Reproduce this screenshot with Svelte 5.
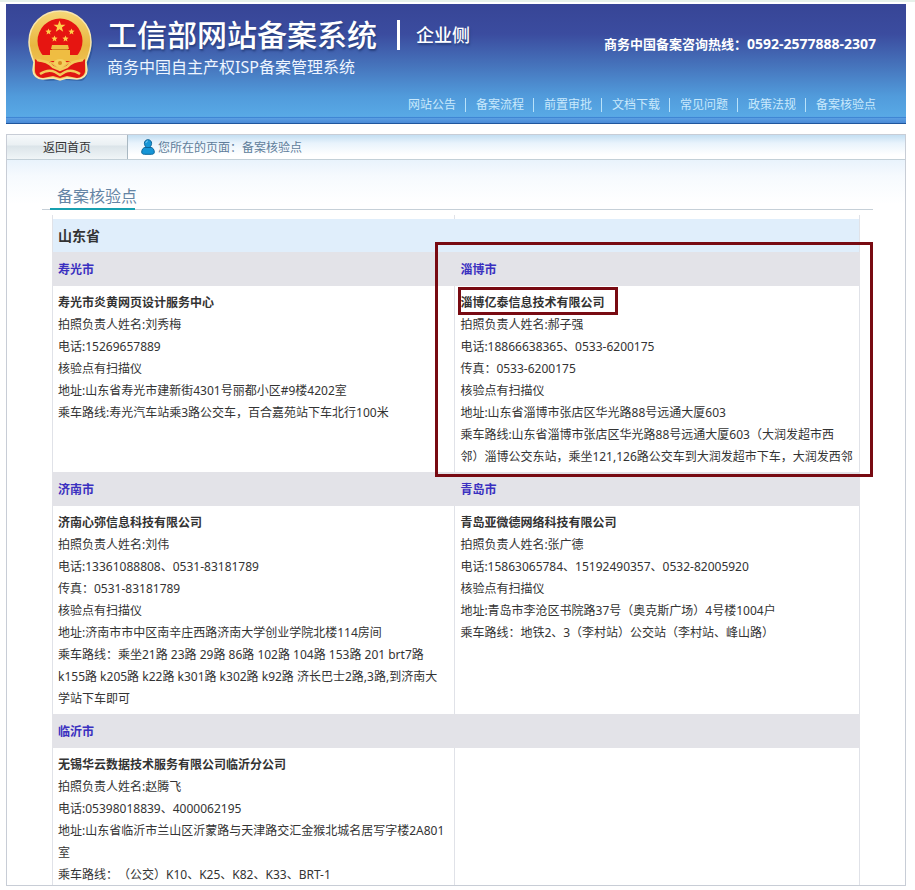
<script>
    const navItems = ['网站公告', '备案流程', '前置审批', '文档下载', '常见问题', '政策法规', '备案核验点'];

    const province = '山东省';

    // Each row holds one or two cities
    const rows = [
        [
            {
                city: '寿光市',
                company: '寿光市炎黄网页设计服务中心',
                lines: [
                    '拍照负责人姓名:刘秀梅',
                    '电话:15269657889',
                    '核验点有扫描仪',
                    '地址:山东省寿光市建新街4301号丽都小区#9楼4202室',
                    '乘车路线:寿光汽车站乘3路公交车，百合嘉苑站下车北行100米'
                ]
            },
            {
                city: '淄博市',
                company: '淄博亿泰信息技术有限公司',
                marked: true,
                lines: [
                    '拍照负责人姓名:郝子强',
                    '电话:18866638365、0533-6200175',
                    '传真：0533-6200175',
                    '核验点有扫描仪',
                    '地址:山东省淄博市张店区华光路88号远通大厦603',
                    '乘车路线:山东省淄博市张店区华光路88号远通大厦603（大润发超市西邻）淄博公交东站，乘坐121,126路公交车到大润发超市下车，大润发西邻'
                ]
            }
        ],
        [
            {
                city: '济南市',
                company: '济南心弥信息科技有限公司',
                lines: [
                    '拍照负责人姓名:刘伟',
                    '电话:13361088808、0531-83181789',
                    '传真：0531-83181789',
                    '核验点有扫描仪',
                    '地址:济南市市中区南辛庄西路济南大学创业学院北楼114房间',
                    '乘车路线：乘坐21路 23路 29路 86路 102路 104路 153路 201 brt7路 k155路 k205路 k22路 k301路 k302路 k92路 济长巴士2路,3路,到济南大学站下车即可'
                ]
            },
            {
                city: '青岛市',
                company: '青岛亚微德网络科技有限公司',
                lines: [
                    '拍照负责人姓名:张广德',
                    '电话:15863065784、15192490357、0532-82005920',
                    '核验点有扫描仪',
                    '地址:青岛市李沧区书院路37号（奥克斯广场）4号楼1004户',
                    '乘车路线：地铁2、3（李村站）公交站（李村站、峰山路）'
                ]
            }
        ],
        [
            {
                city: '临沂市',
                company: '无锡华云数据技术服务有限公司临沂分公司',
                lines: [
                    '拍照负责人姓名:赵腾飞',
                    '电话:05398018839、4000062195',
                    '地址:山东省临沂市兰山区沂蒙路与天津路交汇金猴北城名居写字楼2A801室',
                    '乘车路线：（公交）K10、K25、K82、K33、BRT-1'
                ]
            },
            null
        ]
    ];
</script>

<div class="page">
    <div class="top-strip"></div>

    <header>
        <div class="brand-row">
            <svg class="emblem" viewBox="0 0 66 72" aria-hidden="true">
                <defs>
                    <linearGradient id="gold" x1="0" y1="0" x2="0" y2="1">
                        <stop offset="0" stop-color="#f6d878" />
                        <stop offset="0.5" stop-color="#e8b640" />
                        <stop offset="1" stop-color="#f3cc62" />
                    </linearGradient>
                </defs>
                <path d="M35 3C52 3 66 17 66 34c0 11-5 18-5 24 0 6-2 12-7 13l-17-1-17 1c-7-1-10-6-10-13z" fill="#1f4585" opacity="0.5" />
                <path d="M33 1C50 1 64 14 64 32c0 8-3 15-5 20l1 8c0 5-4 9-10 9l-10-1-7 2-7-2-10 1C10 69 6 65 6 60l1-8C5 47 2 40 2 32 2 14 16 1 33 1z" fill="url(#gold)" stroke="#f8e6ae" stroke-width="1.5" />
                <circle cx="33" cy="31" r="22.5" fill="#e61511" />
                <path d="M8 49c4 4 9 3 14 3l11 8 11-8c5 0 10 1 14-3v12c0 4-4 7-8 7l-10-2-7 2-7-2-10 2c-4 0-8-3-8-7z" fill="#e01612" />
                <path d="m32.500 10.500 1.500 4.200 4.500.1-3.600 2.700 1.300 4.300-3.700-2.600-3.700 2.600 1.300-4.300-3.600-2.700 4.500-.1z" fill="#ffcf4a" />
                <path id="star" d="m21.500 18.500.9 2 2.200.2-1.700 1.500.5 2.200-1.900-1.100-1.900 1.100.5-2.200-1.700-1.500 2.200-.2z" fill="#ffcf4a" />
                <use href="#star" x="23" />
                <use href="#star" x="6" y="7" />
                <use href="#star" x="17" y="7" />
                <path d="M25 35h16l1 4H24zM23 40h20v5h9v6H14v-6h9z" fill="#efbd42" />
                <path d="M25 39.500h16" stroke="#c98220" stroke-width="1" />
                <path d="M10 50c7 1 12 2 16 7l7 3 7-3c4-5 9-6 16-7M13 64c6-4 11-4 15-2l5 3 5-3c4-2 9-2 15 2" fill="none" stroke="#f3cb5a" stroke-width="2.500" />
                <path d="M26 53c2-3 4-4 7-4s5 1 7 4l-7 6z" fill="#f5d15e" />
                <circle cx="33" cy="53" r="2" fill="#d98a1f" />
            </svg>
            <div class="brand">
                <div class="title-line">
                    <h1>工信部网站备案系统</h1>
                    <span class="side">企业侧</span>
                </div>
                <p class="subtitle">商务中国自主产权ISP备案管理系统</p>
            </div>
            <p class="hotline">商务中国备案咨询热线：<span>0592-2577888-2307</span></p>
        </div>
        <nav>
            {#each navItems as item}
                <a href="#top">{item}</a>
            {/each}
        </nav>
    </header>

    <main>
        <div class="crumb-bar">
            <a class="home" href="#home">返回首页</a>
            <svg class="user" viewBox="0 0 14 16" aria-hidden="true">
                <path d="M7 .7c2.200 0 3.600 1.600 3.600 3.700 0 1.500-.7 2.800-1.700 3.500 3 .6 4.400 2.600 4.400 5.300 0 1.500-1.300 2.100-2.800 2.100h-7C2 15.300.7 14.700.7 13.200.7 10.500 2.100 8.500 5.100 7.900 4.100 7.200 3.400 5.900 3.400 4.400 3.400 2.300 4.800.7 7 .7z" fill="#1695d6" stroke="#0a6398" />
                <path d="M4.200 8.500h5.600" stroke="#0a6398" />
                <path d="M5 4c0-1.300.8-2 2-2" fill="none" stroke="#7fd0f5" />
            </svg>
            <span class="crumb">您所在的页面：备案核验点</span>
        </div>

        <div class="content">
            <div class="heading">
                <h2>备案核验点</h2>
            </div>

            <table>
                <colgroup>
                    <col class="first" />
                    <col />
                </colgroup>
                <tbody>
                    <tr class="spacer"><td></td><td></td></tr>
                    <tr class="province">
                        <th colspan="2">{province}</th>
                    </tr>
                    {#each rows as row}
                        <tr class="city">
                            {#each row as point}
                                <th>{point ? point.city : ''}</th>
                            {/each}
                        </tr>
                        <tr class="detail">
                            {#each row as point}
                                <td>
                                    {#if point}
                                        <strong class:marked={point.marked}>{point.company}</strong>
                                        {#each point.lines as line}
                                            <p>{line}</p>
                                        {/each}
                                        {#if point.marked}
                                            <div class="frame"></div>
                                        {/if}
                                    {/if}
                                </td>
                            {/each}
                        </tr>
                    {/each}
                </tbody>
            </table>
        </div>
    </main>
</div>

<style>
    :global(body) {
        margin: 0;
        background: #fff;
    }

    .page {
        display: flex;
        flex-direction: column;
        height: 100vh;
        box-sizing: border-box;
        padding-bottom: 4px;
        font-family: "Noto Sans", "Noto Sans CJK SC", sans-serif;
        font-size: 12px;
        line-height: 22px;
        color: #333;
        text-spacing-trim: space-all;
    }

    h1, h2, p {
        margin: 0;
        font-weight: normal;
    }

    a {
        text-decoration: none;
    }

    .top-strip {
        flex: none;
        height: 2px;
        margin-bottom: 2px;
        background: #e6f1ea;
    }

    header {
        flex: none;
        display: flex;
        flex-direction: column;
        justify-content: space-between;
        box-sizing: border-box;
        min-height: 120px;
        margin: 0 9px 10px 6px;
        padding: 6px 30px 11px 21px;
        border-bottom: 1px solid #20569c;
        background:
            linear-gradient(#3f86d4, #3f86d4) 0 113px / 100% 1px no-repeat,
            linear-gradient(#374596 0, #3b4c9f 30px, #4674bc 62px, #519bdb 92px, #58a9e5 112px, #5b9fe3 114px, #4a8ad6 119px);
    }

    .brand-row {
        display: flex;
        align-items: flex-start;
    }

    .emblem {
        width: 66px;
        height: 72px;
        margin-right: 14px;
    }

    .brand {
        padding-top: 8px;
    }

    .title-line {
        display: flex;
        align-items: center;
        color: #fff;
        text-shadow: 1px 2px 2px #27407f;
    }

    h1 {
        padding-right: 20px;
        font-size: 30px;
        line-height: 34px;
        font-weight: 500;
    }

    .side {
        padding-left: 16px;
        border-left: 3px solid #fff;
        font-size: 18px;
        line-height: 30px;
        font-weight: 500;
    }

    .subtitle {
        margin-top: 4px;
        font-size: 16px;
        color: #eef5ff;
    }

    .hotline {
        margin-left: auto;
        padding-top: 23px;
        font-size: 13px;
        font-weight: bold;
        color: #fff;
        white-space: nowrap;
    }

    .hotline span {
        font-size: 14px;
    }

    nav {
        display: flex;
        justify-content: flex-end;
    }

    nav a {
        padding: 0 9px 0 10px;
        border-left: 1px solid #b9e2fa;
        line-height: 14px;
        color: #c9e9fc;
    }

    nav a:first-child {
        border-left: none;
    }

    nav a:last-child {
        padding-right: 0;
    }

    main {
        flex: 1;
        min-height: 0;
        display: flex;
        flex-direction: column;
        margin: 0 9px 0 6px;
        border: 1px solid #c8cdd6;
    }

    .crumb-bar {
        flex: none;
        display: flex;
        align-items: center;
        height: 24px;
        border-bottom: 1px solid #c3d0d8;
        background: linear-gradient(#c4dff2, #e8f3fc 8px, #fff 20px);
    }

    .home {
        width: 120px;
        margin-right: 13px;
        padding-top: 2px;
        border-right: 1px solid #a9b8c2;
        text-align: center;
        line-height: 22px;
        color: #333;
        background: linear-gradient(#f6f9fb 0, #eaf0f3 10px, #dbe4e9 11px, #f0f5f7 24px);
    }

    .user {
        width: 14px;
        height: 16px;
        margin-right: 3px;
    }

    .crumb {
        padding-top: 2px;
        color: #5f7d9a;
    }

    .content {
        flex: 1;
        min-height: 0;
        overflow: hidden;
        background: linear-gradient(#e9f3fc, #f6fafe 16px, #fff 44px);
    }

    .heading {
        display: flex;
        margin: 22px 32px 5px 35px;
        padding-left: 8px;
        border-bottom: 1px solid #c6d0d8;
    }

    h2 {
        margin-bottom: -1px;
        padding: 2px 0 0 7px;
        width: 78px;
        border-bottom: 2px solid #18a0b0;
        font-size: 16px;
        line-height: 24px;
        white-space: nowrap;
        color: #6484a4;
    }

    table {
        width: calc(100% - 90px);
        margin: 0 45px;
        table-layout: fixed;
        border-collapse: separate;
        border-spacing: 0;
    }

    .first {
        width: 49.8%;
    }

    th, td {
        box-sizing: border-box;
        padding: 6px 5px 4px;
        border-left: 1px solid #e0e2e8;
        text-align: left;
        vertical-align: top;
    }

    th:last-child, td:last-child {
        border-right: 1px solid #e0e2e8;
    }

    .spacer td {
        height: 4px;
        padding: 0;
    }

    .province th {
        padding: 6px 5px 5px;
        background: #e0eefb;
        font-size: 14px;
    }

    .city th {
        padding: 7px 5px 5px;
        height: 34px;
        border-color: #e3e3e8;
        background: #e3e3e8;
        color: #3a30c0;
    }

    .detail td {
        position: relative;
    }

    .detail td:first-child {
        padding-right: 8px;
    }

    strong {
        display: block;
    }

    .marked {
        position: relative;
    }

    /* red frame round the company name */
    .marked::after {
        content: "";
        position: absolute;
        top: -5px;
        left: -2px;
        width: 154px;
        height: 22px;
        border: 3px solid #780a12;
    }

    /* red frame round the whole check point */
    .frame {
        position: absolute;
        inset: -44px -14px -5px -20px;
        z-index: 1;
        border: 3px solid #780a12;
    }
</style>
